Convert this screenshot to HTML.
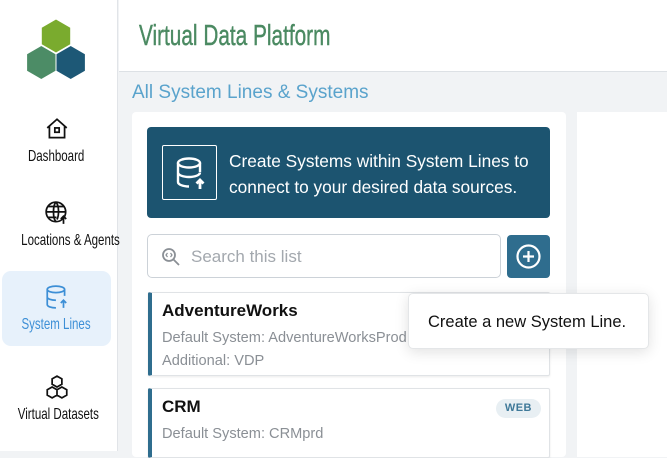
<!DOCTYPE html>
<html><head><meta charset="utf-8"><style>
*{box-sizing:border-box;margin:0;padding:0}
body{width:667px;height:451px;overflow:hidden;background:#f1f3f5;font-family:"Liberation Sans",sans-serif;position:relative}
.side{position:absolute;left:0;top:0;width:118px;height:451px;background:#fff;border-right:1px solid #e1e4e8}
.nav{position:absolute;left:2px;width:109px;text-align:center;font-size:16px;color:#111;white-space:nowrap}
.nav svg{display:block;margin:0 auto 6px}
.nav span{display:inline-block;transform:scaleX(0.72);transform-origin:center}
.hdr{position:absolute;left:119px;top:0;width:548px;height:72px;background:#fff;border-bottom:1px solid #dde1e5}
.hdr span{position:absolute;left:20px;top:20px;font-size:27px;color:#4b8a62;transform:scale(0.77,1.05);transform-origin:left top;-webkit-text-stroke:0.4px #4b8a62}
.title{position:absolute;left:132px;top:82px;font-size:19px;color:#5aa3cc}
.panel{position:absolute;left:132px;top:112px;width:434px;height:345px;background:#fff;border-radius:4px}
.right{position:absolute;left:577px;top:112px;width:100px;height:345px;background:#fff}
.banner{position:absolute;left:147px;top:127px;width:403px;height:91px;background:#1c5470;border-radius:4px;color:#fff}
.banner .ic{position:absolute;left:15px;top:18px;width:55px;height:55px;border:1px solid #fff;border-radius:2px}
.banner p{position:absolute;left:82px;top:21px;font-size:17.3px;line-height:26px}
.search{position:absolute;left:147px;top:234px;width:354px;height:44px;border:1px solid #ccd2d8;border-radius:5px;background:#fff}
.search span{position:absolute;left:43px;top:12px;font-size:17px;color:#a3a8ae}
.plus{position:absolute;left:507px;top:235px;width:43px;height:43px;background:#2f6d8e;border-radius:4px}
.card{position:absolute;left:148px;width:402px;background:#fff;border:1px solid #e0e3e6;border-left:4px solid #2f6d8e;border-radius:2px;box-shadow:0 1px 2px rgba(0,0,0,.08)}
.card b{position:absolute;left:10px;top:8px;font-size:17px;color:#111}
.card .s{position:absolute;left:10px;font-size:14.6px;color:#8a8f95}
.badge{position:absolute;right:8px;top:10px;height:19px;border-radius:10px;background:#e8eff3;color:#3f7999;font-size:11px;font-weight:bold;padding:3px 9px;letter-spacing:.5px}
.tip{position:absolute;left:408px;top:293px;width:241px;height:56px;background:#fff;border-radius:5px;border:1px solid #e4e6e8;box-shadow:0 3px 14px rgba(0,0,0,.12);font-size:16.5px;color:#111;padding:19px 0 0 19px}
</style></head><body>
<div class="side">
<svg style="position:absolute;left:0;top:0" width="118" height="90" viewBox="0 0 118 90">
<polygon points="56,19 70.7,27.5 70.7,44.5 56,53 41.3,44.5 41.3,27.5" fill="#7aab2e" stroke="#fff" stroke-width="1"/>
<polygon points="41.3,45.5 56,54 56,71 41.3,79.5 26.6,71 26.6,54" fill="#4c8c66" stroke="#fff" stroke-width="1"/>
<polygon points="70.7,45.5 85.4,54 85.4,71 70.7,79.5 56,71 56,54" fill="#1d5876" stroke="#fff" stroke-width="1"/>
</svg>
<div class="nav" style="top:116px"><svg width="26" height="26" viewBox="0 0 24 24" fill="none" stroke="#111" stroke-width="1.6"><path d="M3 11 L12 3 L21 11 M5 9.5 V20 H19 V9.5"/><rect x="10" y="11" width="4" height="4"/></svg><span>Dashboard</span></div>
<div class="nav" style="top:200px"><svg width="26" height="26" viewBox="0 0 24 24" fill="none" stroke="#111" stroke-width="1.6"><circle cx="11" cy="11" r="9"/><path d="M2 11h18M11 2c-3 3-3 15 0 18M11 2c3 3 3 12 1 16M3.5 6h15M3.5 16h8"/><path d="M18 22v-7M15.5 17.5 18 15l2.5 2.5"/></svg><span>Locations &amp; Agents</span></div>
<div style="position:absolute;left:2px;top:271px;width:109px;height:75px;background:#e7f1fb;border-radius:9px"></div>
<div class="nav" style="top:284px;color:#3d8fd6"><svg width="26" height="26" viewBox="0 0 24 24" fill="none" stroke="#3d8fd6" stroke-width="1.6"><ellipse cx="11" cy="5" rx="8" ry="3"/><path d="M3 5v14c0 1.7 3.6 3 8 3M19 5v6M3 12c0 1.7 3.6 3 8 3"/><path d="M18 22v-7M15.5 17.5 18 15l2.5 2.5"/></svg><span>System Lines</span></div>
<div class="nav" style="top:374px"><svg width="26" height="26" viewBox="0 0 24 24" fill="none" stroke="#111" stroke-width="1.6"><path d="M12 2l4.5 2.5v5L12 12 7.5 9.5v-5z M7.5 12l4.5 2.5v5L7.5 22 3 19.5v-5z M16.5 12l4.5 2.5v5L16.5 22 12 19.5v-5z"/></svg><span>Virtual Datasets</span></div>
</div>
<div class="hdr"><span>Virtual Data Platform</span></div>
<div class="title">All System Lines &amp; Systems</div>
<div class="panel"></div>
<div class="right"></div>
<div class="banner"><div class="ic"><svg width="55" height="55" viewBox="0 0 55 55" fill="none" stroke="#fff" stroke-width="2.4"><ellipse cx="26" cy="17" rx="11" ry="4.5"/><path d="M15 17v19c0 2.5 5 4.5 11 4.5M37 17v9M15 26.5c0 2.5 5 4.5 11 4.5S37 29 37 26.5"/><path d="M37 43v-9M33.5 37.5 37 34l3.5 3.5" stroke-width="2.8"/></svg></div><p>Create Systems within System Lines to<br>connect to your desired data sources.</p></div>
<div class="search"><svg style="position:absolute;left:13px;top:12px" width="20" height="20" viewBox="0 0 20 20" fill="none" stroke="#8a8f95" stroke-width="1.8"><circle cx="8" cy="8" r="6"/><path d="M12.5 12.5 18 18"/><path d="M6.5 6 5 8l1.5 2M9.5 6 11 8 9.5 10" stroke-width="1.2"/></svg><span>Search this list</span></div>
<div class="plus"><svg style="position:absolute;left:8px;top:8px" width="27" height="27" viewBox="0 0 27 27" fill="none" stroke="#fff" stroke-width="2.2"><circle cx="13.5" cy="13.5" r="11"/><path d="M13.5 8v11M8 13.5h11"/></svg></div>
<div class="card" style="top:292px;height:84px"><b>AdventureWorks</b><div class="badge">WEB</div><div class="s" style="top:37px">Default System: AdventureWorksProd</div><div class="s" style="top:60px">Additional: VDP</div></div>
<div class="card" style="top:388px;height:70px"><b>CRM</b><div class="badge">WEB</div><div class="s" style="top:37px">Default System: CRMprd</div></div>
<div class="tip">Create a new System Line.</div>
</body></html>
